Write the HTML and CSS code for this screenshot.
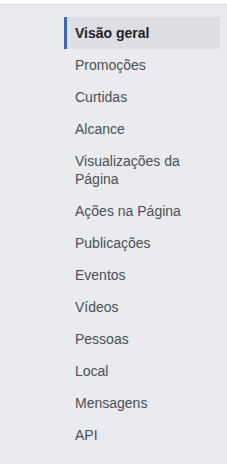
FILE: index.html
```html
<!DOCTYPE html>
<html lang="pt-BR">
	<head>
		<meta charset="UTF-8">
		<meta name="viewport" content="width=device-width, initial-scale=1.0">
		<title>Estatísticas</title>
		<link rel="stylesheet" href="styles.css">
	</head>
	<body>
		<div class="top-bar"></div>
		<div class="page">
			<ul class="side-nav">
				<li class="nav-item active">Visão geral</li>
				<li class="nav-item">Promoções</li>
				<li class="nav-item">Curtidas</li>
				<li class="nav-item">Alcance</li>
				<li class="nav-item">Visualizações da Página</li>
				<li class="nav-item">Ações na Página</li>
				<li class="nav-item">Publicações</li>
				<li class="nav-item">Eventos</li>
				<li class="nav-item">Vídeos</li>
				<li class="nav-item">Pessoas</li>
				<li class="nav-item">Local</li>
				<li class="nav-item">Mensagens</li>
				<li class="nav-item">API</li>
			</ul>
		</div>
	</body>
</html>
```

FILE: styles.css
```css
html, body {
	margin: 0;
	padding: 0;
	height: 100%;
}
body {
	font-family: "Liberation Sans", Arial, sans-serif;
	background-color: #e9ebee;
	overflow: hidden;
}
.top-bar {
	height: 4px;
	background: #fff;
	border-bottom: 1px solid #dddfe2;
}
.page {
	padding: 12px 7px 0 64px;
}
.side-nav {
	list-style: none;
	margin: 0;
	padding: 0;
	width: 156px;
}
.nav-item {
	font-size: 14px;
	line-height: 18px;
	padding: 7px 10px 7px 8px;
	border-left: 3px solid transparent;
	color: #4b4f56;
}
.nav-item.active {
	background-color: #dddfe2;
	border-left-color: #4267b2;
	color: #1d2129;
	font-weight: bold;
}
```
